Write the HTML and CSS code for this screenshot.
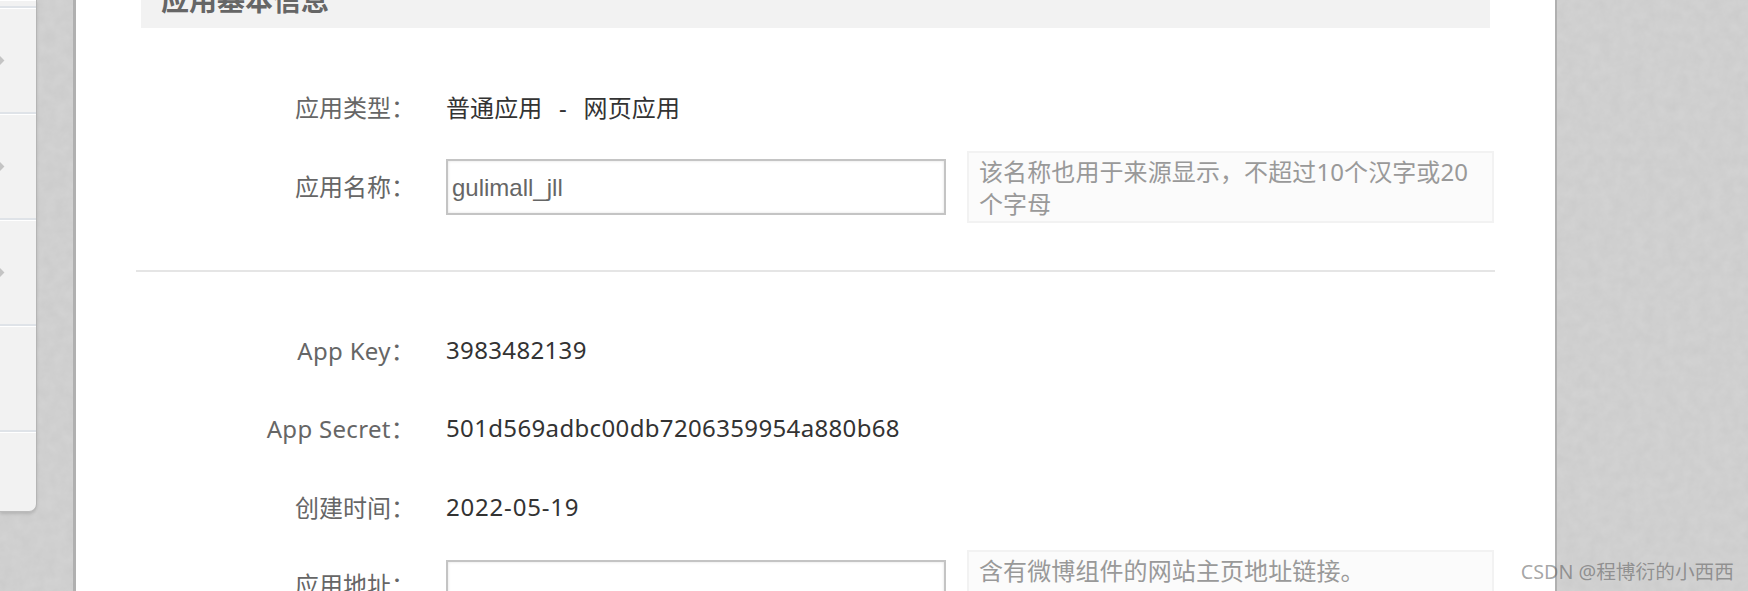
FILE: index.html
```html
<!DOCTYPE html>
<html lang="zh-CN">
<head>
    <meta charset="UTF-8">
    <meta name="viewport" content="width=device-width, initial-scale=1.0">
    <title>应用基本信息</title>
    <link rel="stylesheet" href="styles.css">
</head>
<body>
    <svg class="paper" aria-hidden="true">
        <filter id="grain">
            <feTurbulence type="fractalNoise" baseFrequency="0.09" numOctaves="3" seed="4"/>
            <feColorMatrix type="matrix" values="0 0 0 0 0.5  0 0 0 0 0.5  0 0 0 0 0.5  0.4 0 0 0 -0.08"/>
        </filter>
        <rect width="100%" height="100%" filter="url(#grain)"/>
    </svg>
    <div class="page">
        <div class="sidebar">
            <div class="side-item side-top"></div>
            <div class="side-item"><span class="side-arrow"></span></div>
            <div class="side-item"><span class="side-arrow"></span></div>
            <div class="side-item"><span class="side-arrow"></span></div>
            <div class="side-item"></div>
            <div class="side-item side-last"></div>
        </div>
        <div class="main">
            <div class="section-title"><h2>应用基本信息</h2></div>
            <div class="rows rows-basic">
                <div class="row">
                    <label>应用类型：</label>
                    <div class="value value-type">普通应用&nbsp; - &nbsp;网页应用</div>
                </div>
                <div class="row row-edit">
                    <label>应用名称：</label>
                    <input class="text-input" type="text" value="gulimall_jll">
                    <div class="hint">该名称也用于来源显示，不超过10个汉字或20个字母</div>
                </div>
            </div>
            <div class="divider"></div>
            <div class="rows rows-info">
                <div class="row">
                    <label class="label-latin">App Key：</label>
                    <div class="value">3983482139</div>
                </div>
                <div class="row">
                    <label class="label-latin">App Secret：</label>
                    <div class="value">501d569adbc00db7206359954a880b68</div>
                </div>
                <div class="row">
                    <label>创建时间：</label>
                    <div class="value value-date">2022-05-19</div>
                </div>
                <div class="row row-edit row-address">
                    <label>应用地址：</label>
                    <input class="text-input" type="text">
                    <div class="hint">含有微博组件的网站主页地址链接。</div>
                </div>
            </div>
        </div>
    </div>
    <div class="watermark">CSDN @程博衍的小西西</div>
</body>
</html>
```

FILE: styles.css
```css
html, body {
    height: 591px;
}
body {
    margin: 0;
    overflow: hidden;
    background-color: #d2d2d2;
    font-family: "Noto Sans", "Noto Sans CJK SC", sans-serif;
    font-size: 24px;
    color: #333;
}
.paper {
    position: absolute;
    top: 0;
    left: 0;
    width: 100%;
    height: 100%;
}
.page {
    position: relative;
    display: flex;
    align-items: flex-start;
    height: 591px;
}
.sidebar {
    width: 36px;
    height: 511px;
    margin-right: 36px;
    background: #f2f2f2;
    border-right: 1px solid #b5b5b5;
    border-bottom: 1px solid #bbb;
    border-radius: 0 0 8px 0;
    box-shadow: 0 2px 3px rgba(0, 0, 0, 0.12);
    flex-shrink: 0;
}
.side-item {
    display: flex;
    align-items: center;
    height: 103px;
    border-bottom: 2px solid #dfe3e8;
    border-top: 1px solid #fff;
}
.side-top {
    height: 5px;
}
.side-last {
    height: 73px;
    border-bottom: none;
}
.side-arrow {
    width: 7px;
    height: 7px;
    margin-left: -4px;
    background: #c4c4c4;
    transform: rotate(45deg);
}
.main {
    width: 1484px;
    height: 591px;
    box-sizing: border-box;
    padding: 0 60px;
    background: #fff;
    border-left: 3px solid #b0b0b0;
    border-right: 2px solid #b0b0b0;
    overflow: hidden;
    flex-shrink: 0;
}
.section-title {
    display: flex;
    align-items: flex-end;
    height: 28px;
    margin: 0 5px;
    padding-left: 20px;
    background: #f2f2f2;
    overflow: hidden;
}
.section-title h2 {
    margin: 0 0 12px;
    font-size: 28px;
    line-height: 32px;
    color: #666;
    flex-shrink: 0;
}
.rows-basic {
    margin-top: 50px;
}
.row {
    display: flex;
    align-items: center;
    min-height: 60px;
}
.row label {
    width: 279px;
    margin-right: 31px;
    padding-bottom: 4px;
    text-align: right;
    color: #666;
    flex-shrink: 0;
}
.row .label-latin {
    letter-spacing: 0.3px;
}
.value {
    padding-bottom: 4px;
    color: #333;
    letter-spacing: 0.35px;
}
.value-type {
    letter-spacing: 0.1px;
    word-spacing: 2px;
}
.value-date {
    letter-spacing: 0.8px;
}
.row-edit {
    margin-top: 13px;
}
.text-input {
    width: 500px;
    height: 56px;
    box-sizing: border-box;
    padding: 2px 4px 0;
    border: 2px solid #c4c4c4;
    box-shadow: inset 0 0 3px #e0e0e0;
    background: #fff;
    font-family: "Liberation Sans", sans-serif;
    font-size: 24px;
    color: #666;
    outline: none;
    flex-shrink: 0;
}
.hint {
    width: 527px;
    height: 72px;
    box-sizing: border-box;
    margin-left: 21px;
    padding: 3px 10px;
    border: 2px solid #f2f2f2;
    background: #fbfbfb;
    font-size: 24px;
    line-height: 32px;
    letter-spacing: 0.1px;
    color: #999;
    flex-shrink: 0;
}
.divider {
    height: 2px;
    margin-top: 47px;
    background: #e5e5e5;
}
.rows-info {
    display: flex;
    flex-direction: column;
    gap: 18.5px;
    margin-top: 49px;
}
.row-address {
    margin-top: -7px;
}
.row-address .text-input {
    margin-top: 4px;
}
.watermark {
    position: absolute;
    right: 14px;
    bottom: 5px;
    font-size: 19.7px;
    line-height: 28px;
    color: rgba(90, 90, 90, 0.55);
}
```
